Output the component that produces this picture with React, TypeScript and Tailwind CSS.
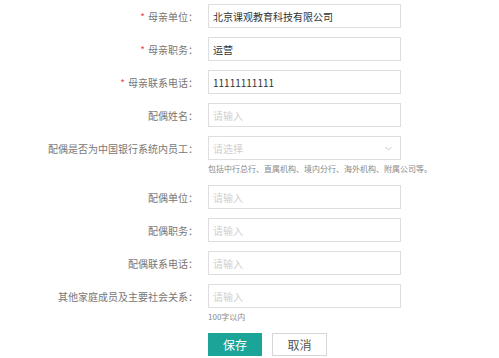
import { ReactNode } from "react";

type Field = {
  label: string;
  required?: boolean;
  value?: string;
  select?: boolean;
  help?: string;
};

const FIELDS: Field[] = [
  { label: "母亲单位", required: true, value: "北京课观教育科技有限公司" },
  { label: "母亲职务", required: true, value: "运营" },
  { label: "母亲联系电话", required: true, value: "11111111111" },
  { label: "配偶姓名" },
  {
    label: "配偶是否为中国银行系统内员工",
    select: true,
    help: "包括中行总行、直属机构、境内分行、海外机构、附属公司等。",
  },
  { label: "配偶单位" },
  { label: "配偶职务" },
  { label: "配偶联系电话" },
  { label: "其他家庭成员及主要社会关系", help: "100字以内" },
];

function Row({ field, children }: { field: Field; children: ReactNode }) {
  return (
    <div className="flex items-start mb-[9px]">
      <div className="w-[198px] h-[24px] flex items-center justify-end text-[10px] text-[#777] shrink-0">
        {field.required && <span className="text-[#e8474f] mr-[3px]">*</span>}
        <span>{field.label}：</span>
      </div>
      <div className="ml-[10px] flex flex-col">{children}</div>
    </div>
  );
}

function Chevron() {
  return (
    <svg width="7" height="5" viewBox="0 0 7 5" fill="none">
      <path d="M0.5 1 L3.5 4 L6.5 1" stroke="#c4c4c4" strokeWidth="0.9" />
    </svg>
  );
}

export default function App() {
  return (
    <div
      className="w-[499px] h-[358px] bg-white pt-[4px] overflow-hidden"
      style={{ fontFamily: '"Noto Sans CJK SC", "Noto Sans", sans-serif' }}
    >
      {FIELDS.map((f) => (
        <Row key={f.label} field={f}>
          <div className="w-[193px] h-[24px] border border-[#dedede] bg-white flex items-center justify-between pl-[4px] pr-[8px]">
            <span
              className={
                f.value
                  ? "text-[10px] text-[#333]"
                  : "text-[10px] text-[#cfcfcf]"
              }
            >
              {f.value ?? (f.select ? "请选择" : "请输入")}
            </span>
            {f.select && <Chevron />}
          </div>
          {f.help && (
            <div className="mt-[3px] leading-[12px] text-[8px] text-[#888] whitespace-nowrap mb-[1px]">
              {f.help}
            </div>
          )}
        </Row>
      ))}

      <div className="flex pl-[208px] mt-[2px] gap-[10px]">
        <button
          type="button"
          className="w-[54px] h-[23px] bg-[#1aa598] text-white text-[12px] flex items-center justify-center"
        >
          保存
        </button>
        <button
          type="button"
          className="w-[55px] h-[23px] bg-white border border-[#d6d6d6] text-[#555] text-[12px] flex items-center justify-center"
        >
          取消
        </button>
      </div>
    </div>
  );
}
